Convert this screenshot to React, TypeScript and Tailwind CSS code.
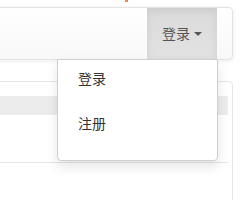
import React from "react";

export default function App() {
  return (
    <div
      className="relative h-[200px] w-[240px] overflow-hidden bg-white text-[14px] leading-[20px]"
      style={{ fontFamily: '"Liberation Sans", "Noto Sans CJK SC", sans-serif' }}
    >
      <div className="h-[7px]">
        <div className="ml-[125px] h-[2px] w-[3px] bg-[#f0884f]" />
      </div>
      <div className="relative -ml-[6px] w-[239px] z-10">
        <div className="flex h-[53px] justify-end rounded-[4px] border border-[#e3e3e3] bg-gradient-to-b from-white to-[#f8f8f8] shadow-[0_1px_5px_rgba(0,0,0,0.075)]">
          <div className="relative mr-[15px] flex h-[51px] items-center bg-gradient-to-b from-[#dbdbdb] to-[#e2e2e2] px-[15px] text-[#555] shadow-[inset_0_3px_9px_rgba(0,0,0,0.075)]">
            <span>登录</span>
            <span className="ml-[4px] inline-block h-0 w-0 border-x-[4px] border-t-[4px] border-x-transparent border-t-[#555]" />
          </div>
        </div>
        <div className="absolute left-[63px] top-[52px] w-[161px] rounded-b-[4px] border border-[#cfcfcf] bg-white pb-[10px] text-[#333] shadow-[0_6px_12px_rgba(0,0,0,0.1)]">
          <div className="px-[20px] pt-[9px] pb-[16px]">登录</div>
          <div className="px-[20px] pt-[9px] pb-[16px]">注册</div>
        </div>
      </div>
      <div className="-ml-[6px] mt-[21px] h-[140px] w-[239px] rounded-t-[4px] border border-[#e6e6e6] pt-[14px] pr-[4px]">
        <div className="h-[19px] bg-[#ececec]" />
        <div className="h-[48px] border-b border-[#e6e6e6]" />
      </div>
    </div>
  );
}
